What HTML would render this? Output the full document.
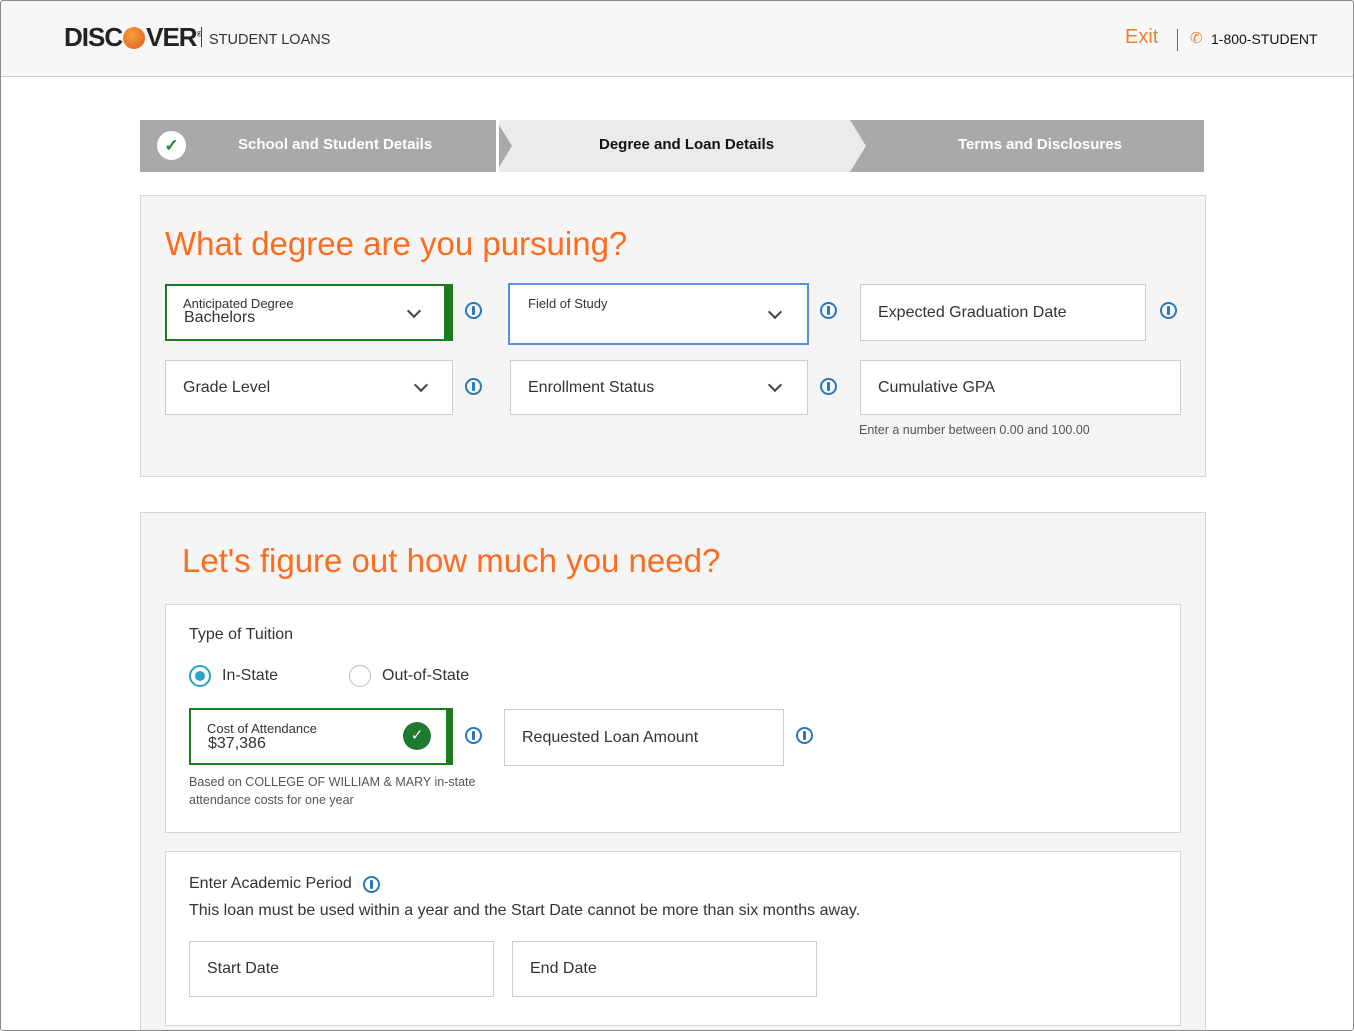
<!DOCTYPE html>
<html style="overflow:hidden;width:1354px;height:1031px"><head><meta charset="utf-8"><style>
*{box-sizing:border-box;margin:0;padding:0}
body{width:1354px;height:1031px;overflow:hidden;background:#fff;font-family:"Liberation Sans",sans-serif;color:#333;position:relative}
.frame{position:absolute;left:0;top:0;width:1354px;height:1031px;border:1px solid #8a8a8a;border-radius:3px;pointer-events:none;z-index:9}
.hdr{position:absolute;left:0;top:0;width:1354px;height:77px;background:#f7f7f7;border-bottom:1px solid #c8c8c8}
.a{position:absolute}
.f{position:absolute;background:#fff;border:1px solid #ccc;font-size:16px;color:#333}
.f .t{position:absolute;left:17px;top:50%;transform:translateY(-50%)}
.chev{position:absolute;width:10px;height:10px;border-right:2px solid #444;border-bottom:2px solid #444;transform:rotate(45deg)}
.info{position:absolute;width:17px;height:17px;border:2px solid #2a78b8;border-radius:50%}
.info:after{content:"";position:absolute;left:5px;top:2px;width:3px;height:9px;background:#2a78b8;border-radius:1px}
.sec{position:absolute;background:#f5f5f5;border:1px solid #d6d6d6}
.box{position:absolute;background:#fff;border:1px solid #d6d6d6}
h2{position:absolute;font-weight:normal;color:#ff6b1f;font-size:33px}
</style></head><body>
<div class="frame"></div>
<div class="hdr">
 <div class="a" style="left:64px;top:22px;font-size:26px;font-weight:bold;color:#222;letter-spacing:-1px">DISC<span style="display:inline-block;width:22px;height:22px;border-radius:50%;background:radial-gradient(circle at 40% 35%,#f7a33a,#e0561a);vertical-align:-3px;margin:0 1px"></span>VER<sup style="font-size:7px">®</sup></div>
 <div class="a" style="left:201px;top:27px;width:1px;height:20px;background:#444"></div>
 <div class="a" style="left:209px;top:32px;font-size:14.5px;color:#333">STUDENT LOANS</div>
 <div class="a" style="left:1125px;top:26px;font-size:20px;color:#f08030">Exit</div>
 <div class="a" style="left:1177px;top:29px;width:1px;height:22px;background:#666"></div>
 <div class="a" style="left:1190px;top:29px;font-size:15px;color:#f08030">✆</div>
 <div class="a" style="left:1211px;top:31px;font-size:14px;color:#111">1-800-STUDENT</div>
</div>
<div class="a" style="left:140px;top:120px;width:1064px;height:52px;background:#a9a9a9"></div>
<div class="a" style="left:496px;top:120px;width:370px;height:52px;background:#ebebeb;clip-path:polygon(0 0,354px 0,370px 26px,354px 52px,0 52px,16px 26px)"></div>
<div class="a" style="left:496px;top:120px;width:3px;height:52px;background:#fff"></div>
<div class="a" style="left:157px;top:131px;width:29px;height:29px;border-radius:50%;background:#fff;color:#1e8a2e;font-size:17px;text-align:center;line-height:29px;font-weight:bold">✓</div>
<div class="a" style="left:238px;top:136px;font-size:15px;font-weight:bold;color:#fff">School and Student Details</div>
<div class="a" style="left:599px;top:136px;font-size:15px;font-weight:bold;color:#111">Degree and Loan Details</div>
<div class="a" style="left:958px;top:136px;font-size:15px;font-weight:bold;color:#fff">Terms and Disclosures</div>
<div class="sec" style="left:140px;top:195px;width:1066px;height:282px"></div>
<h2 style="left:165px;top:225px">What degree are you pursuing?</h2>
<div class="f" style="left:165px;top:284px;width:288px;height:57px;border:2px solid #1e7a1e;border-right:9px solid #1e7a1e">
 <div class="a" style="left:16px;top:10px;font-size:13px">Anticipated Degree</div>
 <div class="a" style="left:17px;top:23px;font-size:16px">Bachelors</div>
 <div class="chev" style="left:242px;top:20px"></div></div>
<div class="info" style="left:465px;top:302px"></div>
<div class="f" style="left:508px;top:283px;width:301px;height:62px;border:2px solid #5b8fe0">
 <div class="a" style="left:18px;top:11px;font-size:13px">Field of Study</div>
 <div class="chev" style="left:260px;top:22px"></div></div>
<div class="info" style="left:820px;top:302px"></div>
<div class="f" style="left:860px;top:284px;width:286px;height:57px"><span class="t">Expected Graduation Date</span></div>
<div class="info" style="left:1160px;top:302px"></div>
<div class="f" style="left:165px;top:360px;width:288px;height:55px"><span class="t">Grade Level</span><div class="chev" style="left:250px;top:19px"></div></div>
<div class="info" style="left:465px;top:378px"></div>
<div class="f" style="left:510px;top:360px;width:298px;height:55px"><span class="t">Enrollment Status</span><div class="chev" style="left:259px;top:19px"></div></div>
<div class="info" style="left:820px;top:378px"></div>
<div class="f" style="left:860px;top:360px;width:321px;height:55px"><span class="t">Cumulative GPA</span></div>
<div class="a" style="left:859px;top:423px;font-size:12.5px;color:#555">Enter a number between 0.00 and 100.00</div>
<div class="sec" style="left:140px;top:512px;width:1066px;height:530px"></div>
<h2 style="left:182px;top:542px">Let's figure out how much you need?</h2>
<div class="box" style="left:165px;top:604px;width:1016px;height:229px"></div>
<div class="a" style="left:189px;top:626px;font-size:16px">Type of Tuition</div>
<div class="a" style="left:189px;top:665px;width:22px;height:22px;border:2px solid #29a3c4;border-radius:50%"><div class="a" style="left:4px;top:4px;width:10px;height:10px;border-radius:50%;background:#29a3c4"></div></div>
<div class="a" style="left:222px;top:667px;font-size:16px">In-State</div>
<div class="a" style="left:349px;top:665px;width:22px;height:22px;border:1px solid #bbb;border-radius:50%"></div>
<div class="a" style="left:382px;top:667px;font-size:16px">Out-of-State</div>
<div class="f" style="left:189px;top:708px;width:264px;height:57px;border:2px solid #1e7a1e;border-right:7px solid #1e7a1e">
 <div class="a" style="left:16px;top:11px;font-size:13px">Cost of Attendance</div>
 <div class="a" style="left:17px;top:25px;font-size:16px">$37,386</div>
 <div class="a" style="left:212px;top:12px;width:28px;height:28px;border-radius:50%;background:#1e7a2e;color:#fff;text-align:center;line-height:28px;font-size:15px">✓</div></div>
<div class="info" style="left:465px;top:727px"></div>
<div class="a" style="left:189px;top:773px;font-size:12.5px;color:#555;line-height:18px">Based on COLLEGE OF WILLIAM &amp; MARY in-state<br>attendance costs for one year</div>
<div class="f" style="left:504px;top:709px;width:280px;height:57px"><span class="t">Requested Loan Amount</span></div>
<div class="info" style="left:796px;top:727px"></div>
<div class="box" style="left:165px;top:851px;width:1016px;height:175px"></div>
<div class="a" style="left:189px;top:875px;font-size:16px">Enter Academic Period</div>
<div class="info" style="left:363px;top:876px"></div>
<div class="a" style="left:189px;top:902px;font-size:16px">This loan must be used within a year and the Start Date cannot be more than six months away.</div>
<div class="f" style="left:189px;top:941px;width:305px;height:56px"><span class="t">Start Date</span></div>
<div class="f" style="left:512px;top:941px;width:305px;height:56px"><span class="t">End Date</span></div>
</body></html>
